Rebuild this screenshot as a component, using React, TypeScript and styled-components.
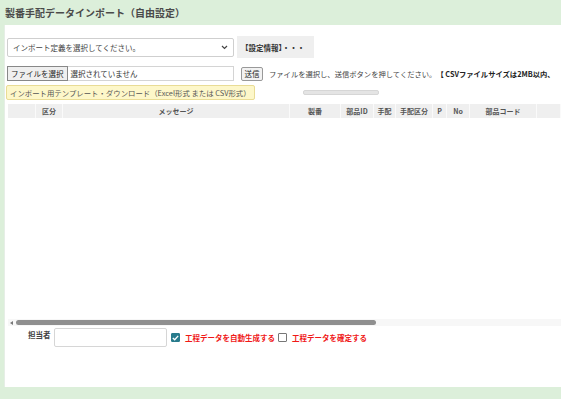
import React from 'react';
import styled, { createGlobalStyle } from 'styled-components';

const GlobalStyle = createGlobalStyle`
  html, body {
    margin: 0;
    padding: 0;
    background: #dcefda;
  }
  body {
    font-family: "Noto Sans CJK JP", "Noto Sans", sans-serif;
    color: #333;
  }
`;

const Page = styled.div`
  width: 561px;
  height: 399px;
  display: flex;
  flex-direction: column;
  overflow: hidden;
`;

const TitleBar = styled.div`
  height: 25px;
  display: flex;
  align-items: center;
  padding-left: 5px;
  font-size: 10px;
  font-weight: 700;
  color: #4a4a4a;
  flex-shrink: 0;
`;

const Panel = styled.div`
  flex: 1;
  margin: 0 0 12px 4px;
  background: #fff;
  border-left: 1px solid #e6eee6;
  display: flex;
  flex-direction: column;
  min-height: 0;
`;

const Row = styled.div<{ $top: number; $height: number }>`
  display: flex;
  align-items: center;
  margin-top: ${(p) => p.$top}px;
  height: ${(p) => p.$height}px;
  padding-left: 2px;
  white-space: nowrap;
  flex-shrink: 0;
  & > * {
    flex-shrink: 0;
  }
`;

const SelectBox = styled.div`
  width: 227px;
  height: 19px;
  box-sizing: border-box;
  border: 1px solid #cfcfcf;
  border-radius: 2px;
  display: flex;
  align-items: center;
  justify-content: space-between;
  padding: 0 5px 0 5px;
  font-size: 7.5px;
  color: #444;
`;

const GrayButton = styled.div`
  margin-left: 3px;
  width: 77px;
  height: 22px;
  box-sizing: border-box;
  background: #efefef;
  display: flex;
  align-items: center;
  padding-left: 4px;
  font-size: 7.5px;
  color: #333;
  font-weight: 700;
`;

const FileField = styled.div`
  width: 227px;
  height: 15px;
  box-sizing: border-box;
  border: 1px solid #d4d4d4;
  display: flex;
  align-items: center;
  font-size: 7.5px;
  color: #333;
`;

const FileButton = styled.div`
  box-sizing: border-box;
  padding: 0 3px;
  display: flex;
  align-items: center;
  background: #efefef;
  border: 1px solid #888;
  margin: 0 3px 0 -1px;
  height: 15px;
  font-size: 7.5px;
  color: #222;
`;

const SendButton = styled.div`
  margin-left: 7px;
  height: 14px;
  width: 22px;
  box-sizing: border-box;
  border: 1px solid #999;
  background: #f2f2f2;
  border-radius: 2px;
  display: flex;
  align-items: center;
  justify-content: center;
  font-size: 7.5px;
  color: #222;
`;

const Note = styled.span<{ $bold?: boolean; $gap: number }>`
  margin-left: ${(p) => p.$gap}px;
  font-size: 7.3px;
  font-weight: ${(p) => (p.$bold ? 700 : 400)};
  color: ${(p) => (p.$bold ? '#222' : '#444')};
`;

const TemplateLink = styled.div`
  height: 15px;
  box-sizing: border-box;
  padding: 0 3px;
  margin-left: -1px;
  display: flex;
  align-items: center;
  background: #fdf7c9;
  border: 1px solid #e9dc95;
  border-radius: 2px;
  font-size: 7.4px;
  color: #555;
`;

const Progress = styled.div`
  margin-left: 48px;
  width: 74px;
  height: 3px;
  border-radius: 2px;
  background: #e4e4e4;
  border: 1px solid #d6d6d6;
`;

const Table = styled.div`
  margin-top: 4px;
  margin-left: 3px;
  flex: 1;
  display: flex;
  flex-direction: column;
  min-height: 0;
`;

const HeaderRow = styled.div`
  display: grid;
  grid-template-columns: 28px 27px 227px 51px 33px 22px 37px 14px 23px 67px 1fr;
  height: 14px;
  background: #efefef;
  flex-shrink: 0;
`;

const HeaderCell = styled.div`
  display: flex;
  align-items: center;
  justify-content: center;
  font-size: 7px;
  font-weight: 700;
  color: #555;
  border-right: 1px solid #fafafa;
  white-space: nowrap;
  overflow: hidden;
`;

const Body = styled.div`
  flex: 1;
`;

const ScrollTrack = styled.div`
  height: 7px;
  background: #f7f7f7;
  display: flex;
  align-items: center;
  flex-shrink: 0;
`;

const ScrollArrow = styled.div`
  width: 0;
  height: 0;
  margin-left: 2px;
  border-top: 2px solid transparent;
  border-bottom: 2px solid transparent;
  border-right: 3px solid #777;
`;

const ScrollThumb = styled.div`
  margin-left: 3px;
  width: 360px;
  height: 5px;
  border-radius: 3px;
  background: #8f8f8f;
`;

const Footer = styled.div`
  display: flex;
  align-items: center;
  height: 19px;
  margin-top: 2px;
  margin-bottom: 40px;
  padding-left: 23px;
  white-space: nowrap;
  flex-shrink: 0;
`;

const FooterLabel = styled.span`
  align-self: flex-start;
  margin-top: 1px;
  width: 26px;
  font-size: 7.5px;
  font-weight: 700;
  color: #444;
`;

const NameInput = styled.div`
  width: 113px;
  height: 19px;
  box-sizing: border-box;
  border: 1px solid #d6d6d6;
  border-radius: 2px;
`;

const Check = styled.div<{ $checked?: boolean; $gap: number }>`
  margin-left: ${(p) => p.$gap}px;
  width: 9px;
  height: 9px;
  box-sizing: border-box;
  border-radius: 1px;
  border: 1px solid ${(p) => (p.$checked ? '#287b8c' : '#777')};
  background: ${(p) => (p.$checked ? '#287b8c' : '#fff')};
  display: flex;
  align-items: center;
  justify-content: center;
`;

const CheckLabel = styled.span`
  margin-left: 5px;
  font-size: 7.5px;
  font-weight: 700;
  color: #f01818;
`;

const columns = ['', '区分', 'メッセージ', '製番', '部品ID', '手配', '手配区分', 'P', 'No', '部品コード', ''];

const App = () => {
  return (
    <Page>
      <GlobalStyle />
      <TitleBar>製番手配データインポート（自由設定）</TitleBar>
      <Panel>
        <Row $top={11} $height={22}>
          <SelectBox>
            <span>インポート定義を選択してください。</span>
            <svg width="7" height="5" viewBox="0 0 7 5">
              <path d="M1 1 L3.5 3.5 L6 1" fill="none" stroke="#444" strokeWidth="1.2" />
            </svg>
          </SelectBox>
          <GrayButton>【設定情報】・・・</GrayButton>
        </Row>
        <Row $top={8} $height={15}>
          <FileField>
            <FileButton>ファイルを選択</FileButton>
            選択されていません
          </FileField>
          <SendButton>送信</SendButton>
          <Note $gap={6}>ファイルを選択し、送信ボタンを押してください。</Note>
          <Note $gap={0} $bold>【 CSVファイルサイズは2MB以内、</Note>
        </Row>
        <Row $top={3} $height={16}>
          <TemplateLink>インポート用テンプレート・ダウンロード（Excel形式 または CSV形式）</TemplateLink>
          <Progress />
        </Row>
        <Table>
          <HeaderRow>
            {columns.map((c, i) => (
              <HeaderCell key={i}>{c}</HeaderCell>
            ))}
          </HeaderRow>
          <Body />
          <ScrollTrack>
            <ScrollArrow />
            <ScrollThumb />
          </ScrollTrack>
        </Table>
        <Footer>
          <FooterLabel>担当者</FooterLabel>
          <NameInput />
          <Check $checked $gap={4}>
            <svg width="7" height="6" viewBox="0 0 7 6">
              <path d="M0.8 3 L2.7 4.8 L6.2 0.9" fill="none" stroke="#fff" strokeWidth="1.3" />
            </svg>
          </Check>
          <CheckLabel>工程データを自動生成する</CheckLabel>
          <Check $gap={3} />
          <CheckLabel>工程データを確定する</CheckLabel>
        </Footer>
      </Panel>
    </Page>
  );
};

export default App;
